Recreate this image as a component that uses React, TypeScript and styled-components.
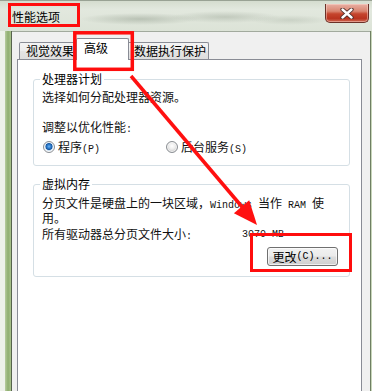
import React from "react";
import styled, { createGlobalStyle } from "styled-components";

const GlobalStyle = createGlobalStyle`
  html, body { margin: 0; padding: 0; background: #dfe6da; }
  #root { width: 372px; height: 391px; overflow: hidden; }
  * { box-sizing: border-box; }
`;

const CJK = `"Noto Sans CJK SC", "Noto Sans", sans-serif`;

const Window = styled.div`
  position: relative;
  width: 372px;
  height: 391px;
  overflow: hidden;
  display: flex;
  flex-direction: column;
  background: #dfe6da;
  font-family: ${CJK};
  font-size: 12px;
  color: #111;
`;

const TitleBar = styled.div`
  height: 31px;
  flex: none;
  display: flex;
  align-items: flex-start;
  padding-left: 12px;
  background:
    radial-gradient(ellipse 60px 6px at 140px 19px, rgba(105, 118, 100, 0.32), transparent),
    radial-gradient(ellipse 55px 6px at 225px 17px, rgba(105, 118, 100, 0.26), transparent),
    radial-gradient(ellipse 40px 5px at 290px 20px, rgba(105, 118, 100, 0.18), transparent),
    linear-gradient(#d3dbcd, #e2e8de 30%, #dce3d7);
  box-shadow: inset 0 1px 0 #99a294;
`;

const Title = styled.div`
  margin-top: 10px;
  font-size: 12px;
  line-height: 14px;
  color: #000;
`;

const CloseButton = styled.div`
  margin-left: auto;
  margin-top: 4px;
  margin-right: 3px;
  width: 44px;
  height: 19px;
  border: 1px solid #6b3128;
  border-top: none;
  border-radius: 0 0 5px 5px;
  background: linear-gradient(#e8b0a4 0%, #d98570 40%, #c5452d 55%, #b9341f 80%, #cf6a55 100%);
  box-shadow: inset 0 0 0 1px rgba(255, 220, 210, 0.45);
  display: flex;
  align-items: center;
  justify-content: center;
`;

const Body = styled.div`
  flex: 1;
  display: flex;
  min-height: 0;
`;

const LeftFrame = styled.div`
  width: 12px;
  flex: none;
  background: linear-gradient(
    to right,
    #edf1e9 0,
    #edf1e9 5px,
    #b7cc9f 5px,
    #8eae6e 8px,
    #a9c28c 11px,
    #56634d 11px,
    #56634d 12px
  );
`;

const RightFrame = styled.div`
  width: 2px;
  flex: none;
  background: linear-gradient(to right, #6f7f63 0, #6f7f63 1px, #c8d6ba 1px);
`;

const Client = styled.div`
  flex: 1;
  display: flex;
  flex-direction: column;
  background: #f0f0f0;
  border-top: 1px solid #a2aa9e;
  padding: 0 8px 0 5px;
  min-height: 0;
`;

const TabRow = styled.div`
  height: 27px;
  flex: none;
  display: flex;
  align-items: flex-end;
  padding-left: 2px;
`;

const Tab = styled.div<{ $active?: boolean; $w: number }>`
  position: relative;
  width: ${(p) => p.$w}px;
  height: ${(p) => (p.$active ? 22 : 17)}px;
  margin-left: ${(p) => (p.$active ? -2 : 0)}px;
  margin-right: ${(p) => (p.$active ? -2 : 0)}px;
  margin-bottom: ${(p) => (p.$active ? -1 : 0)}px;
  z-index: ${(p) => (p.$active ? 2 : 1)};
  border: 1px solid #898c95;
  border-bottom: none;
  border-radius: 2px 2px 0 0;
  background: ${(p) =>
    p.$active ? "#ffffff" : "linear-gradient(#f4f4f4, #ececec 50%, #e4e4e4 51%, #dedede)"};
  padding: ${(p) => (p.$active ? "1px 0 0 7px" : "0 0 0 6px")};
  font-size: 12px;
  line-height: 15px;
  white-space: nowrap;
  color: #000;
`;

const Panel = styled.div`
  flex: 1;
  background: #ffffff;
  border: 1px solid #898c95;
  border-bottom: none;
  padding: 12px 11px 0 15px;
  position: relative;
  z-index: 1;
`;

const Group = styled.fieldset<{ $gapTop?: number }>`
  margin: ${(p) => p.$gapTop ?? 0}px 0 0 0;
  border: 1px solid #d5dfe5;
  border-radius: 3px;
  padding: 3px 11px 10px 8px;
  min-width: 0;
`;

const Legend = styled.legend`
  margin-left: -2px;
  padding: 0 2px;
  font-size: 12px;
  line-height: 14px;
  color: #000;
`;

const Line = styled.div<{ $mt?: number; $lh?: number }>`
  margin-top: ${(p) => p.$mt ?? 0}px;
  line-height: ${(p) => p.$lh ?? 16}px;
  white-space: nowrap;
`;

const Latin = styled.span`
  font-family: "Liberation Mono", monospace;
  font-size: 10px;
  line-height: 1;
`;

const Value = styled.span`
  font-family: "Liberation Mono", monospace;
  font-size: 10px;
  line-height: 14px;
`;

const RadioRow = styled.div`
  margin-top: 4px;
  display: flex;
  line-height: 16px;
`;

const RadioLabel = styled.label<{ $w?: number }>`
  display: flex;
  align-items: center;
  gap: 3px;
  width: ${(p) => (p.$w ? `${p.$w}px` : "auto")};
  white-space: nowrap;
`;

const RadioDot = styled.span<{ $checked?: boolean }>`
  width: 12px;
  height: 12px;
  margin-left: 1px;
  border-radius: 50%;
  border: 1px solid #8b8f94;
  background: ${(p) =>
    p.$checked
      ? "radial-gradient(circle at 50% 45%, #6fb4f2 0, #2f7fd0 1.8px, #1a57a0 3.2px, #bcd6ee 3.8px, #f4f6f8 5px)"
      : "radial-gradient(circle at 50% 40%, #ffffff 0, #eeeeee 3px, #d6d6d6 5px)"};
  box-shadow: inset 0 0 0 1px rgba(255, 255, 255, 0.7);
  flex: none;
`;

const InfoRow = styled.div`
  margin-top: 2px;
  display: grid;
  grid-template-columns: 200px auto;
  align-items: center;
  line-height: 14px;
  white-space: nowrap;
`;

const ButtonRow = styled.div`
  margin-top: 5px;
  display: flex;
  justify-content: flex-end;
`;

const Button = styled.div`
  width: 71px;
  height: 19px;
  border: 1px solid #707070;
  border-radius: 3px;
  background: linear-gradient(#f2f2f2 0%, #ebebeb 48%, #dddddd 52%, #cfcfcf 100%);
  box-shadow: inset 0 0 0 1px rgba(255, 255, 255, 0.65);
  display: flex;
  align-items: center;
  justify-content: center;
  font-size: 12px;
  line-height: 16px;
  white-space: nowrap;
  color: #000;
`;

const Annotations = styled.svg`
  position: absolute;
  left: 0;
  top: 0;
  width: 372px;
  height: 391px;
  pointer-events: none;
  z-index: 10;
`;

export default function App() {
  return (
    <>
      <GlobalStyle />
      <Window>
        <TitleBar>
          <Title>性能选项</Title>
          <CloseButton>
            <svg width="14" height="11" viewBox="0 0 14 11">
              <path d="M2.5 1.5 L11.5 9.5 M11.5 1.5 L2.5 9.5" stroke="#4a2a26" strokeWidth="4.2" strokeLinecap="round" />
              <path d="M2.5 1.5 L11.5 9.5 M11.5 1.5 L2.5 9.5" stroke="#ffffff" strokeWidth="2.4" strokeLinecap="round" />
            </svg>
          </CloseButton>
        </TitleBar>
        <Body>
          <LeftFrame />
          <Client>
            <TabRow>
              <Tab $w={59}>视觉效果</Tab>
              <Tab $w={53} $active>高级</Tab>
              <Tab $w={82}>数据执行保护</Tab>
            </TabRow>
            <Panel>
              <Group>
                <Legend>处理器计划</Legend>
                <Line>选择如何分配处理器资源。</Line>
                <Line $mt={14}>调整以优化性能<Latin>:</Latin></Line>
                <RadioRow>
                  <RadioLabel $w={123}>
                    <RadioDot $checked />
                    <span>程序<Latin>(P)</Latin></span>
                  </RadioLabel>
                  <RadioLabel>
                    <RadioDot />
                    <span>后台服务<Latin>(S)</Latin></span>
                  </RadioLabel>
                </RadioRow>
              </Group>
              <Group $gapTop={11}>
                <Legend>虚拟内存</Legend>
                <Line $mt={2} $lh={14}>
                  分页文件是硬盘上的一块区域，<Latin>Windows </Latin>当作<Latin> RAM </Latin>使
                </Line>
                <Line $lh={14}>用。</Line>
                <InfoRow>
                  <span>所有驱动器总分页文件大小<Latin>:</Latin></span>
                  <Value>3070 MB</Value>
                </InfoRow>
                <ButtonRow>
                  <Button>更改<Latin>(C)...</Latin></Button>
                </ButtonRow>
              </Group>
            </Panel>
          </Client>
          <RightFrame />
        </Body>
        <Annotations viewBox="0 0 372 391">
          <rect x="9.5" y="4.5" width="69" height="21" fill="none" stroke="#ff0d0d" strokeWidth="3" />
          <rect x="74.8" y="32.8" width="57.5" height="36.5" fill="none" stroke="#ff0d0d" strokeWidth="3.5" />
          <rect x="251.5" y="234.5" width="99" height="36" fill="none" stroke="#ff0d0d" strokeWidth="3" />
          <line x1="131" y1="76" x2="243" y2="208" stroke="#ff1010" strokeWidth="3.5" />
          <polygon points="233.9,213.2 257,225 249.2,200.2" fill="#ff1010" />
        </Annotations>
      </Window>
    </>
  );
}
